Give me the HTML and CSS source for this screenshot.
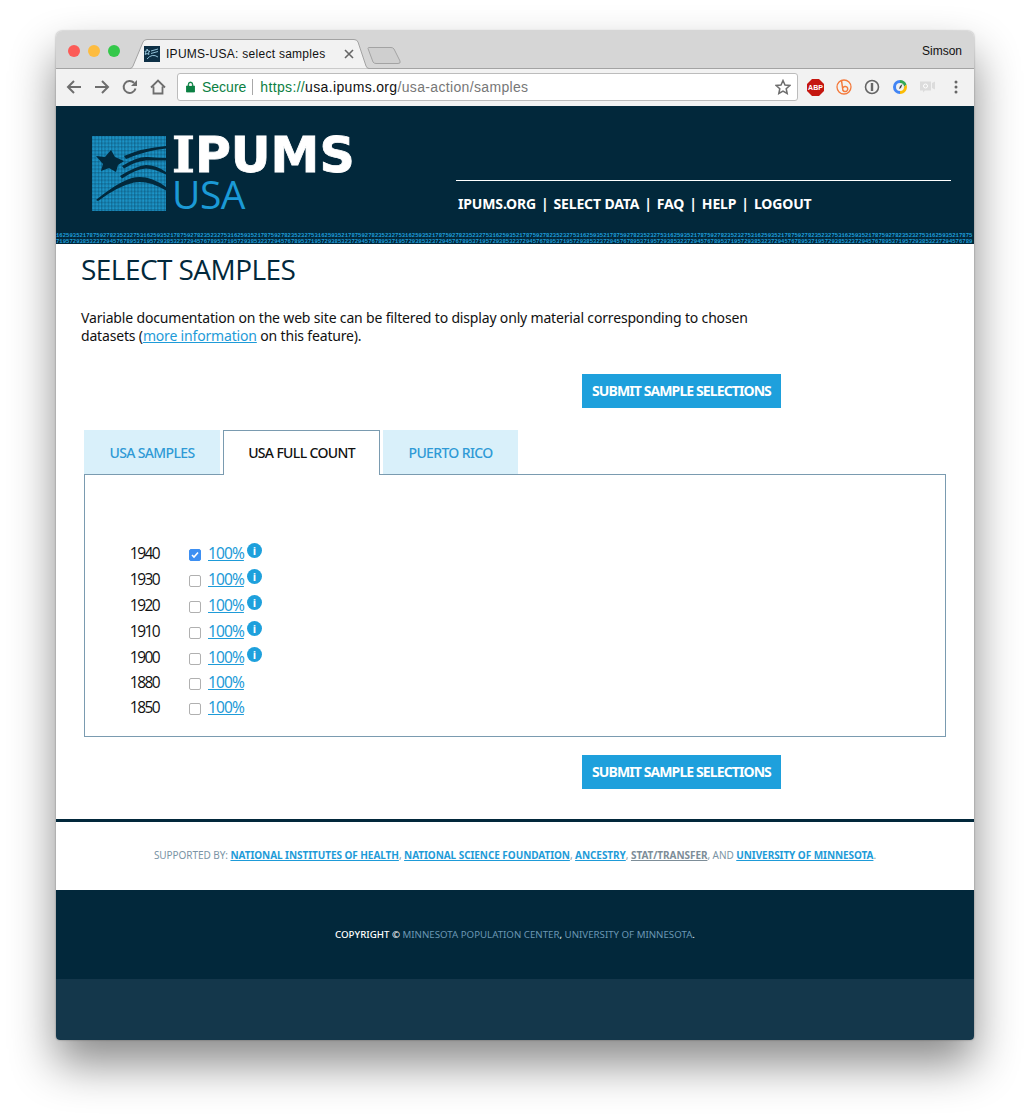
FILE: index.html
```html
<!DOCTYPE html>
<html>
<head>
	<title>IPUMS-USA: select samples</title>
	<meta charset="utf-8">
	<link rel="stylesheet" href="styles.css">
</head>
<body>
<div class="window">
	<div class="titlebar">
		<div class="lights"><i class="red"></i><i class="amber"></i><i class="green"></i></div>
		<div class="tab">
			<svg class="tab-shape" width="242" height="30" viewBox="0 0 242 30"><path d="M0 29.500H2Q4 29.500 5 27L15 3Q16 .5 19 .5H226Q229 .5 230 3L238 27Q239 29.500 241 29.500H242" fill="#f2f2f2" stroke="#a3a3a3"/></svg>
			<svg class="favicon" width="16" height="16" viewBox="0 0 16 16"><rect width="16" height="16" fill="#0d2f45"/><path d="M3 3l1 2 2 .3-1.500 1.200.4 2-1.900-1-1.800 1 .4-2L1 5.300 3 5zM7 5l7-2M7 7.500l7-2M3 13Q8 7 14 11" stroke="#9fd0e6" fill="none" stroke-width=".9"/></svg>
			<span class="tab-title">IPUMS-USA: select samples</span>
			<svg class="tab-close" width="10" height="10" viewBox="0 0 10 10"><path d="M1 1l8 8M9 1l-8 8" stroke="#666" stroke-width="1.600"/></svg>
		</div>
		<svg class="newtab" width="34" height="17" viewBox="0 0 34 17"><path d="M1 1.500Q1 .5 2 .5H24Q26 .5 27 2L33 14Q34 16.500 31 16.500H9Q7 16.500 6 15z" fill="#cfcfcf" stroke="#a3a3a3"/></svg>
		<span class="profile">Simson</span>
	</div>
	<div class="toolbar">
		<svg class="tool" width="16" height="16" viewBox="0 0 16 16"><path d="M15 8H2M8 2L2 8l6 6" fill="none" stroke="#6e6e6e" stroke-width="2"/></svg>
		<svg class="tool" width="16" height="16" viewBox="0 0 16 16"><path d="M1 8h13M8 2l6 6-6 6" fill="none" stroke="#6e6e6e" stroke-width="2"/></svg>
		<svg class="tool" width="16" height="16" viewBox="0 0 16 16"><path d="M13.500 9.500A6 6 0 1 1 12 3.800" fill="none" stroke="#6e6e6e" stroke-width="2"/><path d="M15 1v6H9z" fill="#6e6e6e"/></svg>
		<svg class="tool home" width="16" height="16" viewBox="0 0 16 16"><path d="M1 8.500L8 1.500l7 7M3.500 7.500V14.500H12.500V7.500" fill="none" stroke="#6e6e6e" stroke-width="1.800"/></svg>
		<div class="omnibox">
			<svg class="lock" width="9" height="12" viewBox="0 0 10 12"><path d="M.5 5h9v6.500H.5zM2.500 5V3a2.500 2.500 0 0 1 5 0v2" fill="#0b8043" stroke="#0b8043"/><path d="M3.500 5V3a1.500 1.500 0 0 1 3 0v2z" fill="#f2f2f2"/></svg>
			<span class="secure">Secure</span>
			<span class="url"><b>https://</b><em>usa.ipums.org</em>/usa-action/samples</span>
			<svg class="star" width="16" height="16" viewBox="0 0 16 16"><path d="M8 1.500l2 4.500 4.800.5-3.600 3.200 1 4.800L8 12.100 3.800 14.500l1-4.800L1.200 6.500 6 6z" fill="none" stroke="#6e6e6e" stroke-width="1.500"/></svg>
		</div>
		<div class="extensions">
			<svg width="17" height="17" viewBox="0 0 17 17"><path d="M5 0h7l5 5v7l-5 5H5l-5-5V5z" fill="#c5160f"/><text x="8.500" y="11" class="abp">ABP</text></svg>
			<svg width="16" height="16" viewBox="0 0 16 16"><circle cx="8" cy="8" r="7" fill="none" stroke="#f47a3c" stroke-width="1.300"/><path d="M5.500 1.500L7 12M7 8.500a2.600 2.600 0 1 1 0 3" fill="none" stroke="#f47a3c" stroke-width="1.500"/></svg>
			<svg width="16" height="16" viewBox="0 0 16 16"><circle cx="8" cy="8" r="6.500" fill="none" stroke="#666" stroke-width="1.600"/><path d="M8 4v8" stroke="#666" stroke-width="2.400"/></svg>
			<svg width="16" height="16" viewBox="0 0 16 16"><path d="M8 1A7 7 0 0 1 14.500 5.500L12 8A4 4 0 0 0 8 4z" fill="#34a853"/><path d="M14.500 5.500A7 7 0 0 1 8 15V12A4 4 0 0 0 12 8z" fill="#fbbc05"/><path d="M8 15A7 7 0 0 1 8 1V4A4 4 0 0 0 8 12z" fill="#4285f4"/><path d="M10.500 5l-1.500 4-2 1 1-3z" fill="#444"/></svg>
			<svg width="16" height="16" viewBox="0 0 16 16"><path d="M0 2.500h11v9H5l-2 2v-2H0zM12 4l3-1.500v8L12 9z" fill="#dcdcdc"/><circle cx="5.500" cy="7" r="2" fill="none" stroke="#fff"/></svg>
			<svg class="menu" width="4" height="14" viewBox="0 0 4 14"><circle cx="2" cy="2" r="1.500" fill="#666"/><circle cx="2" cy="7" r="1.500" fill="#666"/><circle cx="2" cy="12" r="1.500" fill="#666"/></svg>
		</div>
	</div>

	<header class="site-header">
		<div class="header-row">
			<a class="logo">
				<svg class="flag" width="74" height="75" viewBox="0 0 74 75">
					<defs>
						<pattern id="digits" width="3.300" height="3.700" patternUnits="userSpaceOnUse">
							<rect x=".3" y=".3" width="2.500" height="2.900" fill="#1f9ed4"/>
							<rect x="1.200" y="1.200" width=".7" height="1" fill="#0f6f9a"/>
						</pattern>
					</defs>
					<rect width="74" height="75" fill="#0c587c"/>
					<rect width="74" height="75" fill="url(#digits)"/>
					<path d="M19 14L23 21L32 25L26 29L24 36L17 32L9 35L11 28L4 20L13 21z" fill="#02283b"/>
					<path d="M32 20Q50 12 74 10V12.500Q52 15 34 23zM30 30Q46 20 56 21Q66 22 74 22V24.500Q62 24.500 54 24.500Q44 25 32 32.500zM28 40Q44 30 54 29Q64 29 74 36V38.500Q62 32.500 54 32.500Q44 33 30 42.500zM4 64Q26 46 40 42Q56 38 74 51V54.500Q56 44 42 46.500Q26 50 6 65z" fill="#02283b"/>
				</svg>
				<span class="wordmark">
					<span class="ipums"><span class="slab">I</span>PUMS</span>
					<span class="usa">USA</span>
				</span>
			</a>
			<nav class="site-nav">
				<a>IPUMS.ORG</a><span>|</span><a>SELECT DATA</a><span>|</span><a>FAQ</a><span>|</span><a>HELP</a><span>|</span><a>LOGOUT</a>
			</nav>
		</div>
		<div class="digit-strip">
			<div>162593521787592782352327531625935217875927823523275316259352178759278235232753162593521787592782352327531625935217875927823523275316259352178759278235232753162593521787592782352327531625935217875927823523275316259352178759278235232753162593521787592782352327531625935217875</div>
			<div>719572938532372945767895371957293853237294576789537195729385323729457678953719572938532372945767895371957293853237294576789537195729385323729457678953719572938532372945767895371957293853237294576789537195729385323729457678953719572938532372945767895371957293853237294576789</div>
		</div>
	</header>

	<main class="content">
		<h1>SELECT SAMPLES</h1>
		<p class="intro">Variable documentation on the web site can be filtered to display only material corresponding to chosen datasets (<a href="#">more information</a> on this feature).</p>
		<div class="submit-row"><button class="submit">SUBMIT SAMPLE SELECTIONS</button></div>
		<div class="tabs">
			<a class="sample-tab">USA SAMPLES</a>
			<a class="sample-tab active">USA FULL COUNT</a>
			<a class="sample-tab">PUERTO RICO</a>
		</div>
		<div class="panel">
			<div class="sample"><span class="year">1940</span><input type="checkbox" checked><a href="#">100%</a><i class="info">i</i></div>
			<div class="sample"><span class="year">1930</span><input type="checkbox"><a href="#">100%</a><i class="info">i</i></div>
			<div class="sample"><span class="year">1920</span><input type="checkbox"><a href="#">100%</a><i class="info">i</i></div>
			<div class="sample"><span class="year">1910</span><input type="checkbox"><a href="#">100%</a><i class="info">i</i></div>
			<div class="sample"><span class="year">1900</span><input type="checkbox"><a href="#">100%</a><i class="info">i</i></div>
			<div class="sample short"><span class="year">1880</span><input type="checkbox"><a href="#">100%</a></div>
			<div class="sample short"><span class="year">1850</span><input type="checkbox"><a href="#">100%</a></div>
		</div>
		<div class="submit-row lower"><button class="submit">SUBMIT SAMPLE SELECTIONS</button></div>
	</main>

	<section class="supporters">
		SUPPORTED BY: <a href="#">NATIONAL INSTITUTES OF HEALTH</a>, <a href="#">NATIONAL SCIENCE FOUNDATION</a>, <a href="#">ANCESTRY</a>, <a href="#" class="grey">STAT/TRANSFER</a>, AND <a href="#">UNIVERSITY OF MINNESOTA</a>.
	</section>
	<footer class="copyright">
		<b>COPYRIGHT ©</b> <a>MINNESOTA POPULATION CENTER</a>, <a>UNIVERSITY OF MINNESOTA</a>.
	</footer>
	<div class="footer-base"></div>
</div>
</body>
</html>
```

FILE: styles.css
```css
*{
	margin: 0;
	padding: 0;
	box-sizing: border-box;
}
body{
	background: #fff;
	padding: 31px 56px 0;
	height: 1120px;
	overflow: hidden;
	font-family: "Noto Sans", "Open Sans", sans-serif;
}
.window{
	width: 918px;
	height: 1009px;
	border-radius: 6px 6px 4px 4px;
	overflow: hidden;
	box-shadow: 0 24px 45px rgba(0,0,0,.46), 0 0 2px rgba(0,0,0,.4);
	display: flex;
	flex-direction: column;
	background: #fff;
}
/* browser chrome */
.titlebar{
	height: 38px;
	background: #d6d6d6;
	display: flex;
	align-items: flex-end;
	border-bottom: 1px solid #a3a3a3;
	flex: none;
}
.lights{
	display: flex;
	gap: 8px;
	padding: 0 0 11px 12px;
	width: 72px;
	align-self: flex-start;
	margin-top: 14px;
}
.lights i{
	width: 12px;
	height: 12px;
	border-radius: 50%;
	flex: none;
}
.red{background: #fc5b57;}
.amber{background: #fdbc40;}
.green{background: #34c84a;}
.tab{
	position: relative;
	width: 242px;
	height: 30px;
	margin-bottom: -1px;
	display: flex;
	align-items: center;
	padding-left: 16px;
	font-size: 12px;
	font-family: "Liberation Sans", sans-serif;
	color: #111;
}
.tab-shape{
	position: absolute;
	left: 0;
	top: 0;
}
.favicon, .tab-title, .tab-close{
	position: relative;
}
.tab-title{
	margin-left: 6px;
	width: 178px;
	white-space: nowrap;
	letter-spacing: .27px;
}
.newtab{
	margin: 0 0 4px -3px;
}
.profile{
	margin-left: auto;
	align-self: flex-start;
	margin-top: 13px;
	padding-right: 12px;
	font: 12px "Liberation Sans", sans-serif;
	color: #111;
}
.toolbar{
	height: 37px;
	background: #f2f2f2;
	display: flex;
	align-items: center;
	padding: 0 0 1px 10px;
	flex: none;
}
.tool{
	margin-right: 12px;
	flex: none;
}
.tool.home{
	margin-right: 11px;
}
.omnibox{
	width: 621px;
	height: 28px;
	background: #fff;
	border: 1px solid #bcbcbc;
	border-radius: 3px;
	display: flex;
	align-items: center;
	padding: 0 6px 0 8px;
	font: 14px "Liberation Sans", sans-serif;
	white-space: nowrap;
}
.secure{
	color: #0b8043;
	margin-left: 7px;
	padding-right: 6px;
	border-right: 1px solid #a8a8a8;
	line-height: 16px;
}
.url{
	margin-left: 7px;
	color: #777;
	letter-spacing: .34px;
}
.url b{
	font-weight: normal;
	color: #0b8043;
}
.url em{
	font-style: normal;
	color: #111;
}
.star{
	margin-left: auto;
}
.extensions{
	display: flex;
	align-items: center;
	gap: 12px;
	margin-left: 9px;
}
.menu{
	margin-left: 6px;
}
.abp{
	font: bold 7px "Liberation Sans", sans-serif;
	fill: #fff;
	text-anchor: middle;
}
/* site header */
.site-header{
	background: #02283b;
	height: 138px;
	flex: none;
	display: flex;
	flex-direction: column;
}
.header-row{
	height: 127px;
	display: flex;
	padding: 30px 23px 0 36px;
}
.logo{
	display: flex;
	gap: 6px;
	width: 364px;
	flex: none;
}
.flag{
	flex: none;
}
.wordmark{
	display: flex;
	flex-direction: column;
	color: #fff;
}
.ipums{
	font: 700 49px/39px "DejaVu Sans", sans-serif;
	-webkit-text-stroke: .8px #fff;
	letter-spacing: 0;
	white-space: nowrap;
}
.slab{
	font-family: "DejaVu Serif", serif;
}
.usa{
	font: 400 39px/37px "Open Sans", sans-serif;
	color: #1b9ad6;
	letter-spacing: -.5px;
}
.site-nav{
	flex: 1;
	height: 45px;
	margin-top: 44px;
	border-top: 1px solid #fff;
	padding: 14px 0 0 2px;
	color: #fff;
	font-size: 14px;
	line-height: 18px;
	font-weight: 700;
	letter-spacing: -.15px;
	display: flex;
	gap: 5px;
	white-space: nowrap;
}
.site-nav a{
	color: #fff;
}
.digit-strip{
	height: 11px;
	overflow: hidden;
	font: bold 5.600px/5.500px "Liberation Mono", monospace;
	color: #1f9fdc;
	white-space: nowrap;
}
/* page content */
.content{
	height: 575px;
	padding: 9px 0 0 25px;
	color: #02283b;
	flex: none;
}
h1{
	font: 400 28px/33px "Open Sans", sans-serif;
	letter-spacing: -.55px;
}
.intro{
	margin-top: 23px;
	width: 690px;
	font-size: 14px;
	line-height: 18px;
	letter-spacing: -.17px;
	color: #111;
}
a{
	color: #1e9bd8;
}
.submit-row{
	margin: 29px 0 0 501px;
}
.submit-row.lower{
	margin-top: 18px;
}
.submit{
	width: 199px;
	height: 34px;
	padding-bottom: 2px;
	background: #1ea0dc;
	border: 0;
	color: #fff;
	font: 700 14px "Noto Sans", sans-serif;
	letter-spacing: -.9px;
}
.tabs{
	display: flex;
	gap: 3px;
	margin: 22px 0 0 3px;
	height: 44px;
	position: relative;
}
.sample-tab{
	background: #d9f0fa;
	color: #2f9ad6;
	font-size: 14px;
	font-weight: 500;
	letter-spacing: -.65px;
	line-height: 46px;
	text-align: center;
	width: 136px;
}
.sample-tab:nth-child(3){
	width: 135px;
}
.sample-tab.active{
	width: 157px;
	height: 45px;
	background: #fff;
	color: #111;
	border: 1px solid #7a9bb0;
	border-bottom: 0;
	line-height: 44px;
	position: relative;
	z-index: 1;
}
.panel{
	width: 862px;
	height: 263px;
	margin-left: 3px;
	border: 1px solid #7a9bb0;
	padding: 65px 0 0 30px;
}
.sample{
	display: grid;
	grid-template-columns: 59px 27px 42px 15px;
	height: 26px;
	padding-bottom: 1px;
	align-items: center;
	font-size: 15.500px;
	color: #111;
	justify-content: start;
}
.sample.short{
	height: 25px;
	padding-bottom: 2px;
}
.year{
	text-align: center;
	letter-spacing: -1.500px;
	font-family: "Open Sans", sans-serif;
}
.sample input{
	appearance: none;
	width: 12px;
	height: 12px;
	margin: 4px 0 0 15px;
	border: 1px solid #b0b0b0;
	border-radius: 2px;
	background: #fff;
}
.sample input:checked{
	border-color: #3d8ff2;
	background: #3d8ff2 url("data:image/svg+xml,%3Csvg xmlns='http://www.w3.org/2000/svg' viewBox='0 0 10 10'%3E%3Cpath d='M2 5l2 2 4-4.500' fill='none' stroke='%23fff' stroke-width='1.600'/%3E%3C/svg%3E") center/10px no-repeat;
}
.sample a{
	margin-left: 7px;
	letter-spacing: -.9px;
}
.info{
	width: 15px;
	height: 15px;
	margin: -5px 0 0 4px;
	border-radius: 50%;
	background: #1ea0dc;
	color: #fff;
	font: 700 11px/15px "Open Sans", sans-serif;
	text-align: center;
}
/* footers */
.supporters{
	height: 71px;
	flex: none;
	border-top: 3px solid #02283b;
	padding-top: 25px;
	text-align: center;
	font-size: 10px;
	line-height: 16px;
	letter-spacing: -.06px;
	color: #7a94a5;
}
.supporters a{
	font-weight: 700;
	color: #1e9bd8;
}
.supporters a.grey{
	color: #7d8d98;
}
.copyright{
	height: 89px;
	flex: none;
	background: #02283b;
	padding-top: 36px;
	text-align: center;
	font-size: 9.700px;
	line-height: 18px;
	color: #fff;
}
.copyright b{
	font-weight: 500;
}
.copyright a{
	color: #6a97b4;
}
.footer-base{
	flex: 1;
	background: #14374b;
}
```
